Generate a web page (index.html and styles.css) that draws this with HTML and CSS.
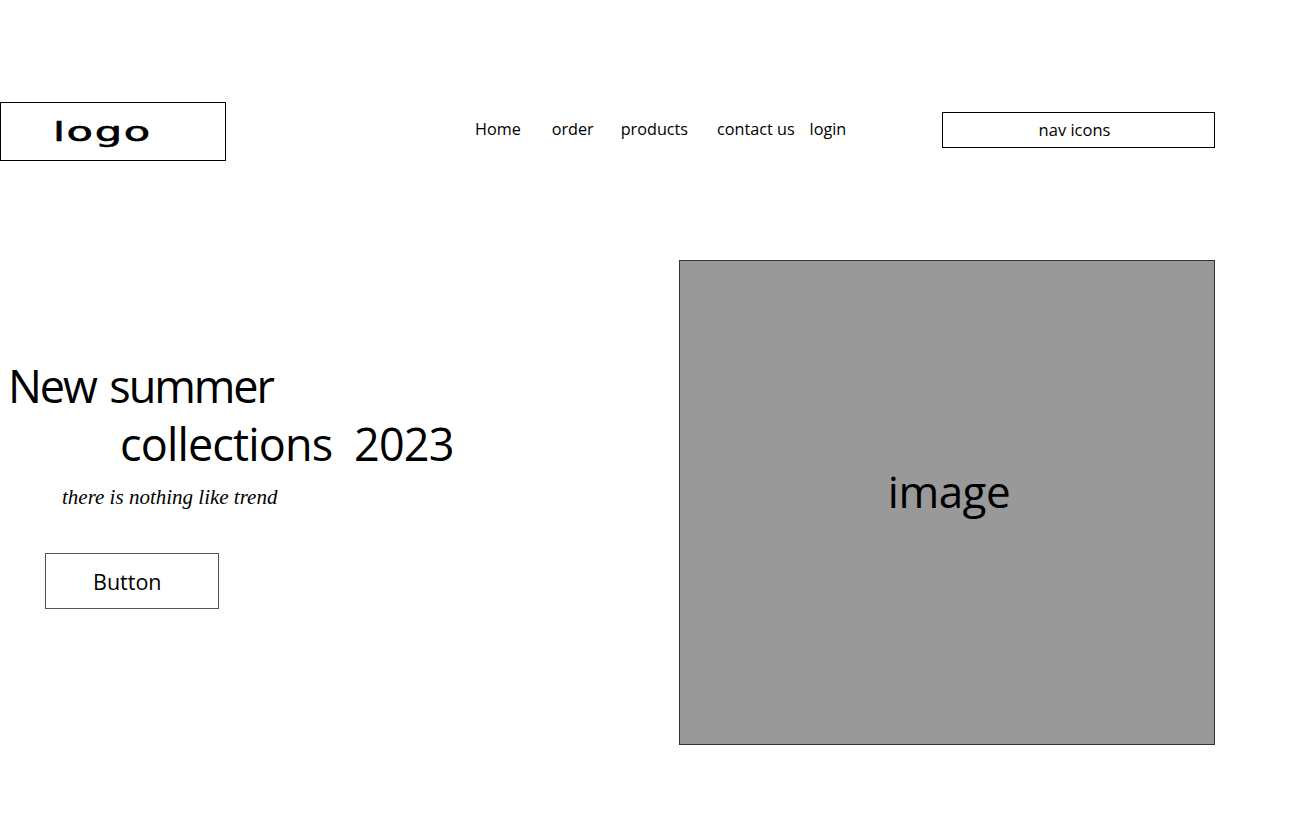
FILE: index.html
```html
<!DOCTYPE html>
<html lang="en">
<head>
<meta charset="utf-8">
<title>New summer collections 2023</title>
<link rel="stylesheet" href="styles.css">
</head>
<body>
<header class="header">
  <div class="logo"><span class="logo-text">logo</span></div>
  <nav class="nav">
    <a class="nav-link nav-home" href="#">Home</a>
    <a class="nav-link nav-order" href="#">order</a>
    <a class="nav-link nav-products" href="#">products</a>
    <a class="nav-link nav-contact" href="#">contact us</a>
    <a class="nav-link nav-login" href="#">login</a>
  </nav>
  <div class="nav-icons">nav icons</div>
</header>
<main class="hero">
  <div class="hero-text">
    <h1 class="title">
      <span class="title-line1">New summer</span>
      <span class="title-line2">collections&nbsp; 2023</span>
    </h1>
    <p class="tagline">there is nothing like trend</p>
    <button class="btn">Button</button>
  </div>
  <div class="image">image</div>
</main>
</body>
</html>
```

FILE: styles.css
```css
html, body {
  margin: 0;
  padding: 0;
  background: #fff;
  color: #000;
  font-family: "Open Sans", "Noto Sans", sans-serif;
}

.header {
  display: flex;
  align-items: flex-start;
  padding-top: 102px;
}

.logo {
  box-sizing: border-box;
  width: 226px;
  height: 59px;
  border: 1px solid #000;
  padding-left: 52px;
  line-height: 57px;
}

.logo-text {
  display: inline-block;
  font-family: "DejaVu Sans", sans-serif;
  font-size: 27px;
  letter-spacing: 1px;
  transform: scaleX(1.6);
  transform-origin: left center;
  -webkit-text-stroke: 0.6px #000;
}

.nav {
  display: flex;
  margin-left: 249px;
  margin-top: 16px;
}

.nav-link {
  color: #000;
  text-decoration: none;
  font-size: 16.2px;
  line-height: 22px;
}

.nav-order { margin-left: 31px; }
.nav-products { margin-left: 27px; }
.nav-contact { margin-left: 29px; }
.nav-login { margin-left: 15px; }

.nav-icons {
  box-sizing: border-box;
  width: 273px;
  height: 36px;
  margin-left: auto;
  margin-right: 96px;
  margin-top: 10px;
  padding-right: 8px;
  border: 1px solid #000;
  text-align: center;
  font-size: 16.5px;
  line-height: 34px;
}

.hero {
  display: flex;
  align-items: flex-start;
  margin-top: 99px;
}

.hero-text {
  width: 679px;
  padding-top: 97px;
}

.title {
  margin: 0;
  font-weight: 400;
  font-size: 45px;
  line-height: 58px;
}

.title-line1 {
  display: block;
  padding-left: 8px;
  letter-spacing: -2.1px;
  word-spacing: 4px;
}

.title-line2 {
  display: block;
  padding-left: 120px;
  letter-spacing: -0.85px;
}

.tagline {
  margin: 10px 0 0 62px;
  font-family: "Liberation Serif", serif;
  font-style: italic;
  font-size: 21px;
  line-height: 28px;
}

.btn {
  display: block;
  box-sizing: border-box;
  width: 174px;
  height: 56px;
  margin: 42px 0 0 45px;
  padding: 0 0 0 47px;
  border: 1px solid #555;
  background: #fff;
  color: #000;
  font-family: "Open Sans", "Noto Sans", sans-serif;
  font-size: 21.5px;
  text-align: left;
}

.image {
  box-sizing: border-box;
  width: 536px;
  height: 485px;
  padding: 0 0 24px 4px;
  background: #999;
  border: 1px solid #333;
  display: flex;
  align-items: center;
  justify-content: center;
  font-size: 44px;
  letter-spacing: -0.5px;
}
```
